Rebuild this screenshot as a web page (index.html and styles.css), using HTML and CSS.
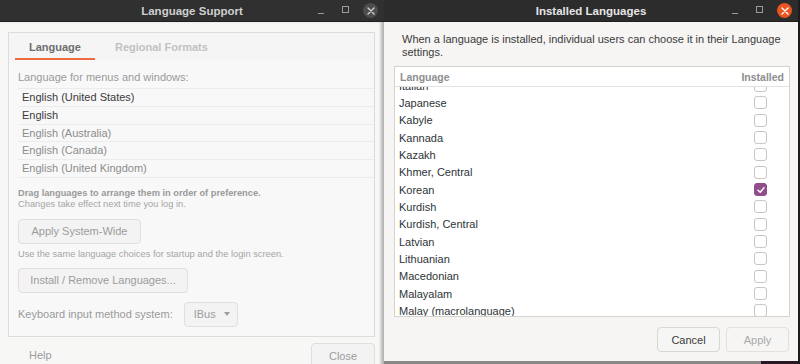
FILE: index.html
```html
<!DOCTYPE html>
<html>
<head>
<meta charset="utf-8">
<link rel="stylesheet" href="styles.css">
</head>
<body>
<div class="desktop">
  <section class="win win-left">
    <header class="titlebar titlebar-inactive">
      <span></span>
      <span class="title">Language Support</span>
      <div class="wm-buttons">
        <span class="wm-btn"><span class="wm-min"></span></span>
        <span class="wm-btn"><span class="wm-max"></span></span>
        <span class="wm-btn wm-close-gray">
          <svg width="8" height="8" viewBox="0 0 8 8"><path d="M1 1 L7 7 M7 1 L1 7" stroke="#d0d0d0" stroke-width="1.4" stroke-linecap="round"/></svg>
        </span>
      </div>
    </header>
    <div class="left-body">
      <div class="notebook">
        <div class="tabs">
          <span class="tab tab-active">Language</span>
          <span class="tab">Regional Formats</span>
        </div>
        <div class="page">
          <div class="label">Language for menus and windows:</div>
          <ul class="lang-list">
            <li class="strong">English (United States)</li>
            <li class="strong">English</li>
            <li>English (Australia)</li>
            <li>English (Canada)</li>
            <li>English (United Kingdom)</li>
          </ul>
          <div class="hint-bold">Drag languages to arrange them in order of preference.</div>
          <div class="hint">Changes take effect next time you log in.</div>
          <div class="btn btn-faded btn-apply-wide">Apply System-Wide</div>
          <div class="hint hint-gap">Use the same language choices for startup and the login screen.</div>
          <div class="btn btn-faded btn-install">Install / Remove Languages...</div>
          <div class="kbd-row">
            <span class="label">Keyboard input method system:</span>
            <span class="combo">IBus <span class="caret"></span></span>
          </div>
        </div>
      </div>
      <div class="left-footer">
        <span class="help">Help</span>
        <span class="btn btn-faded btn-close">Close</span>
      </div>
    </div>
  </section>
  <div class="right-col">
    <section class="win win-right">
      <header class="titlebar">
        <span></span>
        <span class="title">Installed Languages</span>
        <div class="wm-buttons">
          <span class="wm-btn"><span class="wm-min"></span></span>
          <span class="wm-btn"><span class="wm-max"></span></span>
          <span class="wm-btn wm-close-orange">
            <svg width="8" height="8" viewBox="0 0 8 8"><path d="M1 1 L7 7 M7 1 L1 7" stroke="#ffffff" stroke-width="1.4" stroke-linecap="round"/></svg>
          </span>
        </div>
      </header>
      <div class="right-body">
        <p class="intro">When a language is installed, individual users can choose it in their Language settings.</p>
        <div class="table">
          <div class="thead">
            <span>Language</span>
            <span>Installed</span>
          </div>
          <div class="tview">
            <ul class="rows">
              <li><span>Italian</span><span class="cb"></span></li>
              <li><span>Japanese</span><span class="cb"></span></li>
              <li><span>Kabyle</span><span class="cb"></span></li>
              <li><span>Kannada</span><span class="cb"></span></li>
              <li><span>Kazakh</span><span class="cb"></span></li>
              <li><span>Khmer, Central</span><span class="cb"></span></li>
              <li><span>Korean</span><span class="cb cb-on"><svg width="10" height="10" viewBox="0 0 10 10"><path d="M2 5.2 L4.2 7.2 L8 2.8" fill="none" stroke="#fff" stroke-width="1.5" stroke-linecap="round" stroke-linejoin="round"/></svg></span></li>
              <li><span>Kurdish</span><span class="cb"></span></li>
              <li><span>Kurdish, Central</span><span class="cb"></span></li>
              <li><span>Latvian</span><span class="cb"></span></li>
              <li><span>Lithuanian</span><span class="cb"></span></li>
              <li><span>Macedonian</span><span class="cb"></span></li>
              <li><span>Malayalam</span><span class="cb"></span></li>
              <li><span>Malay (macrolanguage)</span><span class="cb"></span></li>
            </ul>
          </div>
        </div>
        <div class="actions">
          <span class="btn btn-cancel">Cancel</span>
          <span class="btn btn-disabled">Apply</span>
        </div>
      </div>
    </section>
    <div class="bottom-strip">
      <span class="strip-gray"></span>
    </div>
  </div>
  <div class="edge"></div>
</div>
</body>
</html>
```

FILE: styles.css
```css
* { box-sizing: border-box; }
html, body { margin: 0; padding: 0; }
body {
  width: 800px;
  height: 364px;
  overflow: hidden;
  background: #2a1624;
  font-family: "Liberation Sans", Arial, sans-serif;
  font-size: 10.5px;
  color: #333;
}
ul { list-style: none; margin: 0; padding: 0; }
p { margin: 0; }

.desktop {
  display: flex;
  height: 364px;
}

/* ---------- windows ---------- */
.win { display: flex; flex-direction: column; }
.win-left { width: 384px; height: 364px; }
.right-col { width: 414px; display: flex; flex-direction: column; }
.win-right { height: 361px; }
.edge { width: 2px; background: #1e1a1d; }

.titlebar {
  height: 22px;
  flex: none;
  background: #2c2c2c;
  display: grid;
  grid-template-columns: 1fr auto 1fr;
  align-items: center;
  border-bottom: 1px solid #1f1f1f;
}
.titlebar-inactive { background: #303030; }
.title {
  font-weight: bold;
  font-size: 11.5px;
  color: #e6e6e6;
}
.titlebar-inactive .title { color: #cfcfcf; }

.wm-buttons {
  justify-self: end;
  display: flex;
  align-items: center;
  gap: 10px;
  padding-right: 6px;
}
.wm-btn {
  width: 15px;
  height: 15px;
  display: flex;
  align-items: center;
  justify-content: center;
}
.wm-min {
  width: 6px;
  height: 1px;
  background: #9a9a9a;
  margin-top: 5px;
}
.wm-max {
  width: 7px;
  height: 7px;
  border: 1px solid #9a9a9a;
  margin-top: -2px;
}
.wm-close-gray { border-radius: 50%; background: #4d4d4d; }
.wm-close-orange { border-radius: 50%; background: #e95420; }

/* ---------- left window ---------- */
.left-body {
  flex: 1;
  background: #f7f7f6;
  padding: 10px 9px 0 8px;
  box-shadow: inset -4px 0 3px -1px rgba(0,0,0,0.28);
  display: flex;
  flex-direction: column;
}
.notebook {
  border: 1px solid #dcdcdc;
  background: #f8f8f8;
  height: 305px;
  display: flex;
  flex-direction: column;
}
.tabs {
  display: flex;
  gap: 6px;
  padding-left: 6px;
  height: 27px;
  background: #f5f5f5;
}
.tab {
  padding: 0 14px;
  display: flex;
  align-items: center;
  font-weight: bold;
  font-size: 11px;
  color: #c2c2c2;
  border-bottom: 2px solid transparent;
  padding-top: 2px;
}
.tab-active { color: #6e6e6e; border-bottom-color: #ef6b3f; }

.page { padding: 10px 0 0 9px; }
.label { color: #9a9a9a; line-height: 14px; font-size: 11px; }
.lang-list { margin-top: 4px; border-top: 1px solid #ececec; }
.lang-list li {
  height: 17.75px;
  line-height: 17px;
  padding-left: 4px;
  color: #8c8c8c;
  font-size: 11px;
  border-bottom: 1px solid #ececec;
}
.lang-list li.strong { color: #3b3b3b; }

.hint-bold {
  margin-top: 10px;
  font-size: 9.25px;
  line-height: 11px;
  font-weight: bold;
  color: #9a9a9a;
}
.hint {
  font-size: 9.3px;
  line-height: 11px;
  color: #a5a5a5;
}
.hint-gap { margin-top: 5px; }

.btn {
  display: inline-flex;
  align-items: center;
  justify-content: center;
  height: 25px;
  border: 1px solid #d9d6d3;
  border-radius: 4px;
  background: #f6f6f5;
  font-size: 11px;
}
.btn-faded { color: #9c9c9c; border-color: #e0dfde; background: #f3f3f3; }
.btn-apply-wide { width: 123px; margin-top: 9px; }
.btn-install { width: 170px; margin-top: 8px; }

.kbd-row {
  margin-top: 9px;
  display: flex;
  align-items: center;
  gap: 11px;
}
.combo {
  width: 54px;
  height: 25px;
  border: 1px solid #e0dfde;
  border-radius: 4px;
  background: #f3f3f3;
  color: #9c9c9c;
  font-size: 11px;
  display: flex;
  align-items: center;
  padding-left: 9px;
  gap: 8px;
}
.caret {
  width: 0;
  height: 0;
  border-left: 3.5px solid transparent;
  border-right: 3.5px solid transparent;
  border-top: 4px solid #9c9c9c;
}

.left-footer {
  display: flex;
  justify-content: space-between;
  align-items: flex-start;
  padding: 6px 0 0 21px;
}
.help { color: #9c9c9c; font-size: 11px; margin-top: 6px; }
.btn-close { width: 64px; height: 26px; }

/* ---------- right window ---------- */
.right-body {
  flex: 1;
  background: #f6f5f4;
  padding: 11px 8px 0 10px;
  display: flex;
  flex-direction: column;
}
.intro {
  padding-left: 8px;
  font-size: 11px;
  line-height: 13px;
  color: #3a3a3a;
}
.table {
  margin-top: 7px;
  height: 251px;
  border: 1px solid #d6d2ce;
  background: #ffffff;
  display: flex;
  flex-direction: column;
}
.thead {
  height: 20px;
  flex: none;
  display: flex;
  justify-content: space-between;
  align-items: center;
  padding: 0 5px 0 5px;
  border-bottom: 1px solid #e4e2df;
  color: #8e8e8e;
  font-weight: bold;
  font-size: 10.5px;
}
.tview { flex: 1; overflow: hidden; }
.rows { margin-top: -10px; }
.rows li {
  height: 17.33px;
  display: flex;
  align-items: center;
  justify-content: space-between;
  padding: 0 22px 0 4px;
  font-size: 11px;
  color: #2e3436;
}
.cb {
  width: 13px;
  height: 13px;
  border: 1px solid #c9c5c1;
  border-radius: 3px;
  background: #fff;
  display: flex;
  align-items: center;
  justify-content: center;
}
.cb-on { background: #924d8b; border-color: #924d8b; }

.actions {
  display: flex;
  justify-content: flex-end;
  gap: 6px;
  margin-top: 10px;
  padding-right: 1px;
}
.btn-cancel { width: 63px; height: 25px; color: #3a3a3a; }
.btn-disabled { width: 63px; height: 25px; color: #a9a9a9; background: #f6f5f4; border-color: #e2dfdc; }

.bottom-strip { flex: 1; display: flex; }
.strip-gray { width: 377px; background: #8a8886; }
```
